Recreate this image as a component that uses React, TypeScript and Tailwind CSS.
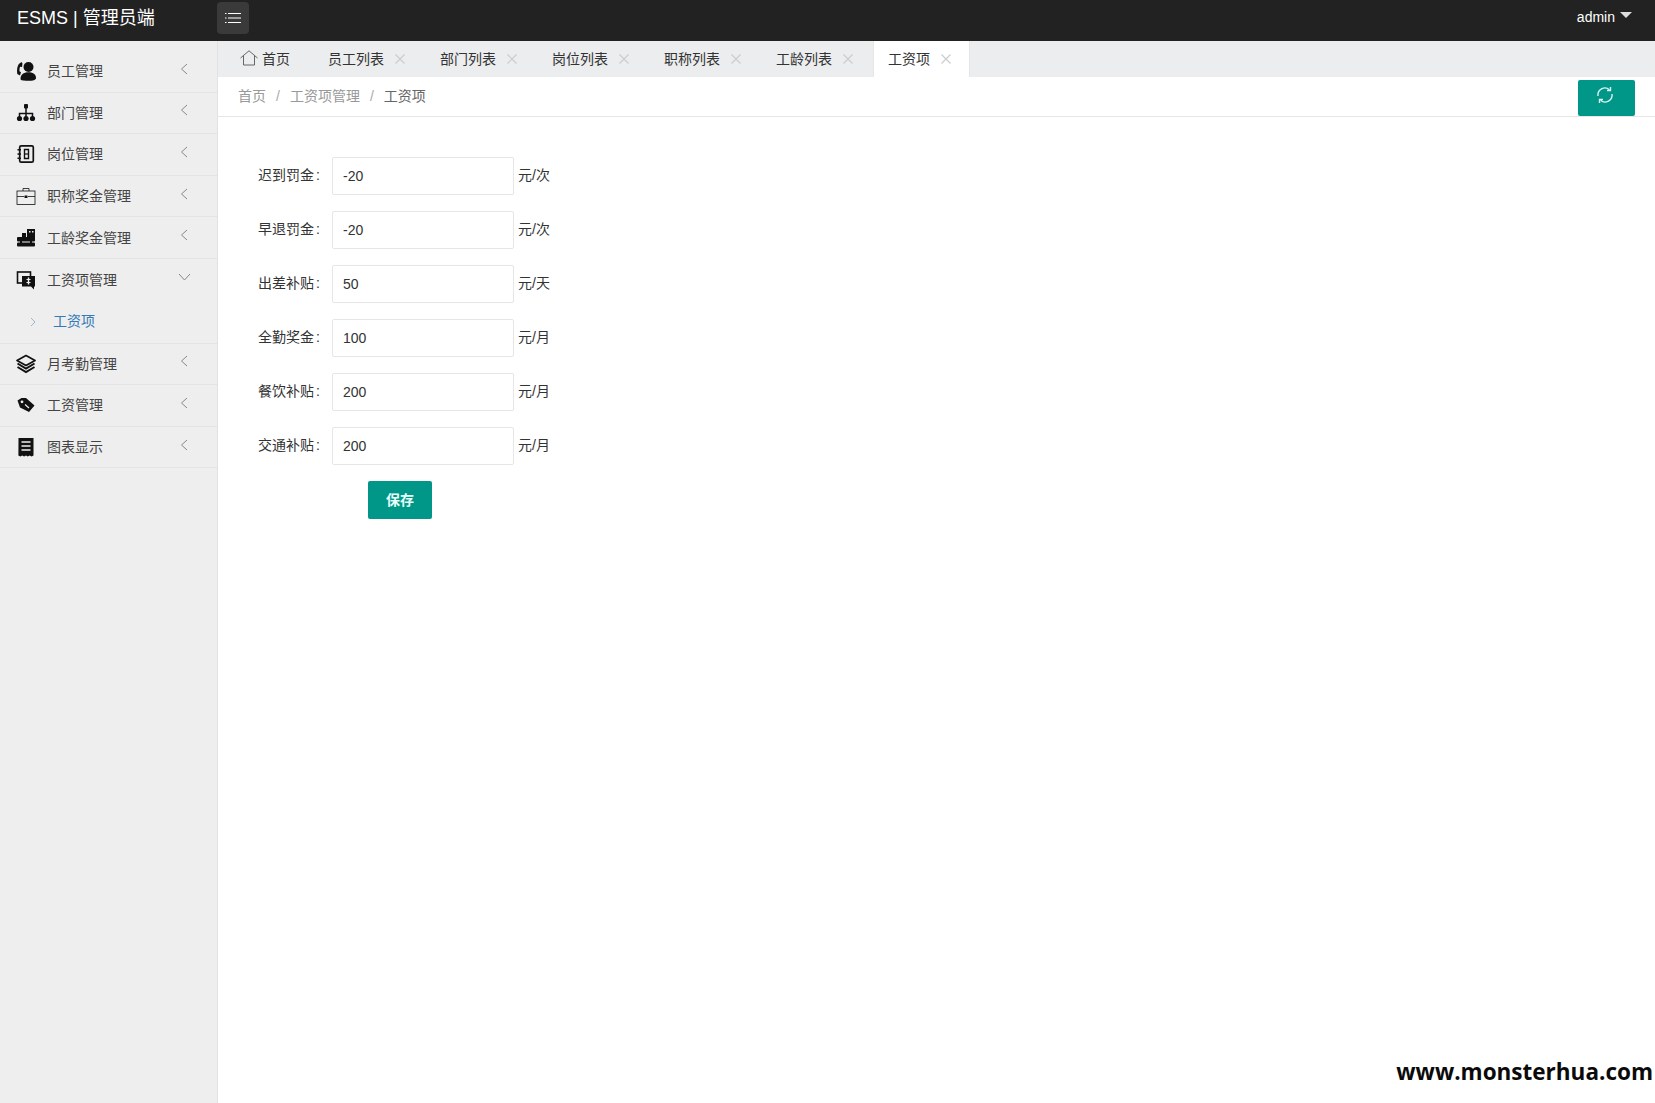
import type { ReactNode } from "react";

const font = { fontFamily: '"Liberation Sans", "Noto Sans CJK SC", sans-serif' };

const icons: Record<string, ReactNode> = {
  user: (
    <>
      <circle cx="12.500" cy="6" r="5" />
      <path d="M4.500 18c0-4.500 2.800-6.800 8-6.800s7.500 2.500 7.500 5.800c0 2.200-3.200 2.800-7.500 2.800S4.500 19.500 4.500 18z" />
      <path d="M5.500 1 2.800 3C1 6 .7 9.500 1.300 13L4 14.500l1-3.200-1.500-1c-.2-1.500 0-3 .5-4.500l2 .2.500-3.500z" />
    </>
  ),
  sitemap: (
    <>
      <rect x="8" y="1" width="4" height="4.500" rx="1" />
      <path d="M10 5v5M3.500 14v-3.500h13V14M10 10v4" fill="none" stroke="currentColor" strokeWidth="1.500" />
      <circle cx="3.500" cy="15.500" r="2.600" />
      <circle cx="10" cy="15.500" r="2.600" />
      <circle cx="16.500" cy="15.500" r="2.600" />
    </>
  ),
  book: (
    <>
      <rect x="3.700" y="1.800" width="13.600" height="16.400" rx="1.500" fill="none" stroke="currentColor" strokeWidth="1.700" />
      <rect x="1.500" y="5" width="3.500" height="1.500" />
      <rect x="1.500" y="9.300" width="3.500" height="1.500" />
      <rect x="1.500" y="13.500" width="3.500" height="1.500" />
      <path d="M8.500 5.500h4v9h-4z" fill="none" stroke="currentColor" strokeWidth="1.400" />
      <path d="M8.500 10h4" stroke="currentColor" strokeWidth="1.200" />
    </>
  ),
  case: (
    <>
      <rect x="1" y="5" width="18" height="13.500" fill="none" stroke="currentColor" strokeWidth="0.800" />
      <path d="M7 5V2.500h6V5M1 10.500h7M12 10.500h7" fill="none" stroke="currentColor" strokeWidth="0.800" />
      <rect x="8.500" y="9.500" width="3" height="2.500" />
    </>
  ),
  firm: (
    <>
      <rect x="11" y="1" width="8" height="9" />
      <rect x="13" y="3" width="1.500" height="1.500" fill="#eee" />
      <rect x="16" y="3" width="1.500" height="1.500" fill="#eee" />
      <rect x="6" y="5" width="4" height="4" />
      <rect x="1" y="9" width="18" height="4.500" rx="1" />
      <rect x="1" y="14.500" width="18" height="4" rx="1" />
      <rect x="4" y="12" width="2" height="4" />
      <rect x="14" y="12" width="2" height="4" />
    </>
  ),
  pay: (
    <>
      <rect x="1.500" y="2" width="13" height="11" fill="none" stroke="currentColor" strokeWidth="1.600" />
      <path d="M6 6h13v10.500h-1v3l-3-3H6z" />
      <path d="M12.500 7.500v7" stroke="#eee" strokeWidth="1.400" />
      <path d="M10.500 9.500h4M10.500 12.500h4" stroke="#eee" strokeWidth="1" />
    </>
  ),
  layers: (
    <>
      <path d="M10 1.500 19 6.500 10 11.500 1 6.500z" fill="none" stroke="currentColor" strokeWidth="1.700" strokeLinejoin="round" />
      <path d="M1.500 9.500 10 14.500 18.500 9.500" fill="none" stroke="currentColor" strokeWidth="2" />
      <path d="M1.500 13 10 18 18.500 13" fill="none" stroke="currentColor" strokeWidth="2" />
    </>
  ),
  tag: (
    <>
      <path d="M1.500 5.500 5.500 3H10l8.500 7.500-5.500 6.500L4 12.500z" />
      <circle cx="6" cy="6.800" r="1.400" fill="#eee" />
      <path d="M9 9.500l4 3.500" stroke="#eee" strokeWidth="1.200" />
    </>
  ),
  receipt: (
    <>
      <path d="M2.500 1h15v17.500l-1.900 1-1.900-1-1.900 1-1.800-1-1.900 1-1.900-1-1.900 1-1.900-1z" />
      <path d="M5.500 5h9M5.500 9h9M5.500 13h9" stroke="#eee" strokeWidth="1.500" />
    </>
  ),
};

function Icon({ name }: { name: string }) {
  return (
    <svg viewBox="0 0 20 20" className="w-5 h-5 text-[#111]" fill="currentColor">
      {icons[name]}
    </svg>
  );
}

function ChevronLeft() {
  return (
    <svg viewBox="0 0 8 12" className="w-2 h-3 text-[#888]" fill="none" stroke="currentColor" strokeWidth="1">
      <path d="M7 1 1.500 6 7 11" />
    </svg>
  );
}

function ChevronDown() {
  return (
    <svg viewBox="0 0 13 8" className="w-[13px] h-2 text-[#888]" fill="none" stroke="currentColor" strokeWidth="1">
      <path d="M1 1l5.500 6L12 1" />
    </svg>
  );
}

function CloseX() {
  return (
    <svg viewBox="0 0 10 10" className="w-[10px] h-[10px] text-[#ccc]" fill="none" stroke="currentColor" strokeWidth="1.200">
      <path d="M.5.500l9 9M9.500.500l-9 9" />
    </svg>
  );
}

function NavItem({ icon, label, open }: { icon: string; label: string; open?: boolean }) {
  return (
    <div className={`h-[41.6px] flex items-center pl-4 text-sm text-[#444] ${open ? "" : "border-b border-[#e4e4e4]"}`}>
      <Icon name={icon} />
      <span className="ml-[11px] flex-1">{label}</span>
      {open ? (
        <span className="mr-[26px] mb-[5px]">
          <ChevronDown />
        </span>
      ) : (
        <span className="mr-[29px] mb-[5px]">
          <ChevronLeft />
        </span>
      )}
    </div>
  );
}

const tabs = ["员工列表", "部门列表", "岗位列表", "职称列表", "工龄列表"];

const fields = [
  { label: "迟到罚金", value: "-20", unit: "元/次" },
  { label: "早退罚金", value: "-20", unit: "元/次" },
  { label: "出差补贴", value: "50", unit: "元/天" },
  { label: "全勤奖金", value: "100", unit: "元/月" },
  { label: "餐饮补贴", value: "200", unit: "元/月" },
  { label: "交通补贴", value: "200", unit: "元/月" },
];

export default function App() {
  return (
    <div className="relative h-screen flex flex-col overflow-hidden bg-white" style={font}>
      <header className="h-[41px] bg-[#222222] flex items-center shrink-0">
        <div className="w-[217px] pl-[17px] pb-[6px] text-lg text-white">ESMS | 管理员端</div>
        <button className="w-8 h-8 mb-[5px] bg-[#3a3a3a] rounded-sm flex items-center justify-center">
          <svg viewBox="0 0 16 12" className="w-4 h-3 text-white" fill="none" stroke="currentColor" strokeWidth="1.200">
            <path d="M3 1.500h13M3 6h13M3 10.500h13M0 1.500h1.500M0 6h1.500M0 10.500h1.500" />
          </svg>
        </button>
        <div className="ml-auto mr-[23px] mb-[8px] flex items-center gap-[5px] text-sm text-white">
          admin
          <span className="mb-[4px] w-0 h-0 border-x-[6px] border-x-transparent border-t-[6px] border-t-[#ddd]" />
        </div>
      </header>

      <div className="flex-1 flex min-h-0">
        <aside className="w-[218px] shrink-0 bg-[#eeeeee] border-r border-[#e2e2e2] pt-[10px]">
          <NavItem icon="user" label="员工管理" />
          <NavItem icon="sitemap" label="部门管理" />
          <NavItem icon="book" label="岗位管理" />
          <NavItem icon="case" label="职称奖金管理" />
          <NavItem icon="firm" label="工龄奖金管理" />
          <NavItem icon="pay" label="工资项管理" open />
          <div className="h-[43px] flex items-center pl-[30px] text-sm text-[#337ab7] border-b border-[#e4e4e4]">
            <svg viewBox="0 0 6 10" className="w-[6px] h-[10px] text-[#9fb4c8]" fill="none" stroke="currentColor" strokeWidth="1">
              <path d="M1 1l4 4-4 4" />
            </svg>
            <span className="ml-[18px] mb-[1px] -translate-x-px">工资项</span>
          </div>
          <NavItem icon="layers" label="月考勤管理" />
          <NavItem icon="tag" label="工资管理" />
          <NavItem icon="receipt" label="图表显示" />
        </aside>

        <main className="flex-1 min-w-0">
          <div className="h-[36px] bg-[#ecedef] flex items-stretch text-sm text-[#333]">
            <div className="pl-[22px] pr-[23px] flex items-center gap-[4px]">
              <svg viewBox="0 0 18 16" className="w-[18px] h-4 mb-[3px] text-[#666]" fill="none" stroke="currentColor" strokeWidth="1">
                <path d="M.500 8 9 .800 17.500 8M3.500 6v9h11V6" />
              </svg>
              <span>首页</span>
            </div>
            {tabs.map((t) => (
              <div key={t} className="pl-[15px] pr-[20px] flex items-center gap-[11px]">
                <span>{t}</span>
                <CloseX />
              </div>
            ))}
            <div className="pl-[14px] pr-[18px] flex items-center gap-[11px] bg-white border-x border-[#e6e6e6]">
              <span>工资项</span>
              <CloseX />
            </div>
          </div>

          <div className="h-[40px] border-b border-[#e6e6e6] flex items-center pl-[20px] text-sm text-[#999]">
            <span className="mb-[2px]">首页</span>
            <span className="mx-[10px] mb-[2px] text-[#aaa]">/</span>
            <span className="mb-[2px]">工资项管理</span>
            <span className="mx-[10px] mb-[2px] text-[#aaa]">/</span>
            <span className="mb-[2px] text-[#666]">工资项</span>
            <button className="ml-auto mr-5 mt-[3px] w-[57px] h-[36px] pb-[7px] pr-[3px] bg-[#009688] rounded-[2px] flex items-center justify-center">
              <svg viewBox="0 0 18 18" className="w-[18px] h-[18px] text-[#d8f5f0]" fill="none" stroke="currentColor" strokeWidth="1.400">
                <path d="M2 10a7 7 0 0 1 11.500-6.300M16 8a7 7 0 0 1-11.500 6.300" />
                <path d="M14.500 1v3.500H11M3.500 17v-3.500H7" />
              </svg>
            </button>
          </div>

          <form className="pt-10 flex flex-col gap-4">
            {fields.map((f) => (
              <div key={f.label} className="flex items-center text-sm text-[#333]">
                <label className="w-[114px] pr-[12px] mb-[2px] flex justify-end gap-[2px]">
                  {f.label}
                  <span>:</span>
                </label>
                <input
                  readOnly
                  value={f.value}
                  className="w-[182px] h-[38px] px-[10px] border border-[#e6e6e6] rounded-[2px] outline-none"
                />
                <span className="ml-1 mb-[2px]">{f.unit}</span>
              </div>
            ))}
            <button type="button" className="ml-[150px] w-[64px] h-[38px] bg-[#009688] rounded-[2px] text-sm text-[#e6fffa] font-bold">
              保存
            </button>
          </form>
        </main>
      </div>

      <div className="absolute right-0 bottom-[10px] h-[42px] px-[2px] bg-white text-[22.500px] leading-[42px] font-bold text-[#0a0a0a] font-['Open_Sans']">
        www.monsterhua.com
      </div>
    </div>
  );
}
